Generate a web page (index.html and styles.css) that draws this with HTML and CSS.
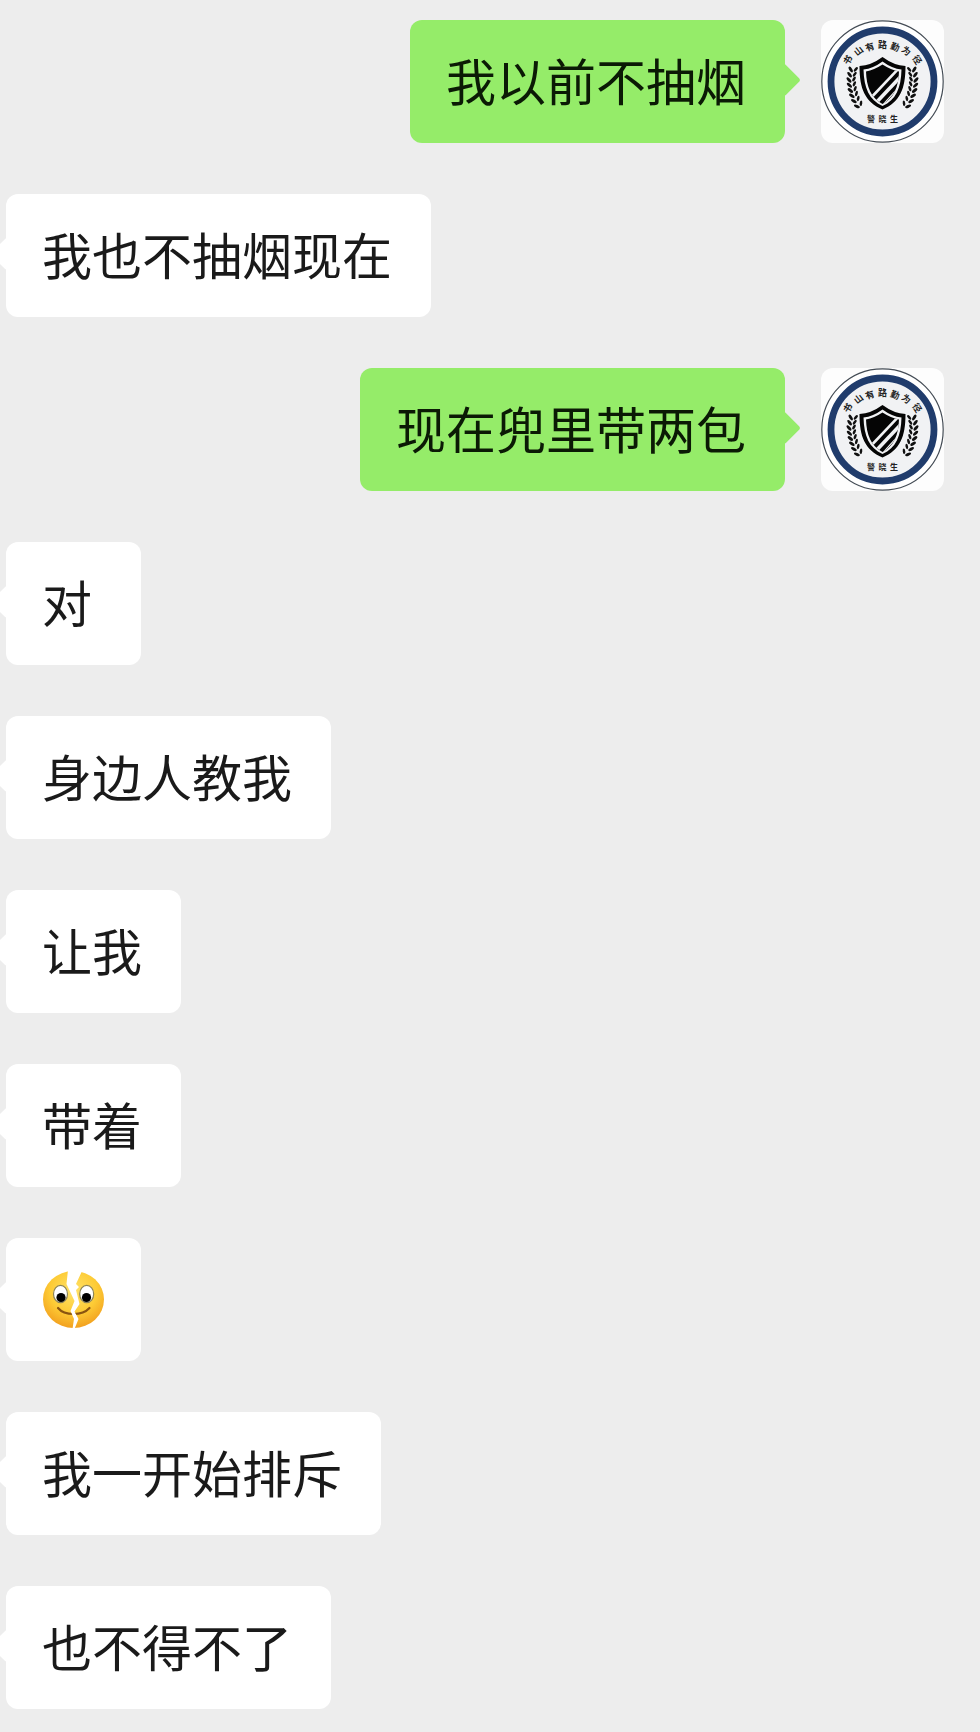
FILE: index.html
```html
<!DOCTYPE html>
<html lang="zh-CN">

<head>
    <meta charset="UTF-8">
    <meta name="viewport" content="width=device-width, initial-scale=1.0">
    <title>聊天</title>
    <link rel="stylesheet" href="styles.css">
</head>

<body>
    <!-- shared avatar badge -->
    <svg class="sprite" aria-hidden="true">
        <defs>
            <clipPath id="shieldInner">
                <path d="M61.5 44.5 Q53 50 45 51.5 C45.5 67 50 78 61.5 84 C73 78 77.5 67 78 51.5 Q70 50 61.5 44.5Z" />
            </clipPath>
            <g id="leaves">
                <ellipse cx="-3" cy="-1" rx="1.5" ry="3.2" transform="rotate(-42 -3 -1)" />
                <ellipse cx="2" cy="-2" rx="1.3" ry="2.8" transform="rotate(32 2 -2)" />
            </g>
            <g id="laurel" fill="#111">
                <use href="#leaves" transform="translate(32.5 51) rotate(10)" />
                <use href="#leaves" transform="translate(31.5 56) rotate(6)" />
                <use href="#leaves" transform="translate(31 61) rotate(0)" />
                <use href="#leaves" transform="translate(31.5 66) rotate(-5)" />
                <use href="#leaves" transform="translate(32.5 71) rotate(-10)" />
                <use href="#leaves" transform="translate(34 76) rotate(-15)" />
                <use href="#leaves" transform="translate(36 81) rotate(-20)" />
                <use href="#leaves" transform="translate(39 86) rotate(-25)" />
            </g>
            <symbol id="badge" viewBox="0 0 123 123">
                <rect width="123" height="123" fill="#fdfdfd" />
                <circle cx="61.5" cy="61.5" r="60.7" fill="#fff" stroke="#444c55" stroke-width="1.2" />
                <circle cx="61.5" cy="61.5" r="51.5" fill="#f1f2f4" stroke="#203c6c" stroke-width="6.8" />
                <g class="badge-text" font-size="9">
                    <text x="61.5" y="24" transform="rotate(-58 61.5 61.5)">书</text>
                    <text x="61.5" y="26" transform="rotate(-38 61.5 61.5)">山</text>
                    <text x="61.5" y="28" transform="rotate(-20 61.5 61.5)">有</text>
                    <text x="61.5" y="28">路</text>
                    <text x="61.5" y="28" transform="rotate(20 61.5 61.5)">勤</text>
                    <text x="61.5" y="26" transform="rotate(38 61.5 61.5)">为</text>
                    <text x="61.5" y="24" transform="rotate(58 61.5 61.5)">径</text>
                </g>
                <g class="badge-text" font-size="8">
                    <text x="50" y="101.5">警</text>
                    <text x="61.5" y="101.5">晓</text>
                    <text x="73" y="101.5">生</text>
                </g>
                <use href="#laurel" />
                <use href="#laurel" transform="translate(123 0) scale(-1 1)" />
                <path d="M61.5 37 Q50 45.5 38.5 46 C38.5 69 44 82 61.5 89.5 C79 82 84.5 69 84.5 46 Q73 45.5 61.5 37Z" fill="#050505" />
                <path d="M61.5 41.5 Q52 48.5 42.5 49.5 C43 68 48 80 61.5 86 C75 80 80 68 80.5 49.5 Q71 48.5 61.5 41.5Z" fill="#f1f2f4" />
                <g clip-path="url(#shieldInner)">
                    <rect x="38" y="40" width="46" height="50" fill="#050505" />
                    <g stroke="#f1f2f4" fill="none">
                        <path d="M46 82 L80 46" stroke-width="2.6" />
                        <path d="M52 86 L84 52" stroke-width="3.6" />
                        <path d="M59 88 L86 58" stroke-width="1.2" />
                    </g>
                </g>
            </symbol>
        </defs>
    </svg>

    <main class="chat">
        <div class="message sent">
            <div class="bubble">我以前不抽烟</div>
            <svg class="avatar" role="img" aria-label="头像"><use href="#badge" /></svg>
        </div>
        <div class="message">
            <div class="bubble">我也不抽烟现在</div>
        </div>
        <div class="message sent">
            <div class="bubble">现在兜里带两包</div>
            <svg class="avatar" role="img" aria-label="头像"><use href="#badge" /></svg>
        </div>
        <div class="message">
            <div class="bubble">对</div>
        </div>
        <div class="message">
            <div class="bubble">身边人教我</div>
        </div>
        <div class="message">
            <div class="bubble">让我</div>
        </div>
        <div class="message">
            <div class="bubble">带着</div>
        </div>
        <div class="message">
            <div class="bubble bubble-emoji">
                <svg class="emoji" viewBox="0 0 61 57" role="img" aria-label="裂开">
                    <defs>
                        <radialGradient id="face" cx="0.5" cy="0.35" r="0.65">
                            <stop offset="0" stop-color="#ffe36a" />
                            <stop offset="0.6" stop-color="#fdcb35" />
                            <stop offset="1" stop-color="#f2a01f" />
                        </radialGradient>
                        <clipPath id="halves">
                            <path d="M-1 -1 H25 L23.5 13 L31.5 30 L27.5 40 L31 48 L29.5 58 H-1Z" />
                            <path d="M62 -1 H39.5 L33 13 L36 16 L33 19 L36.5 33 L31.5 40.5 L35.5 48 L31.5 58 H62Z" />
                        </clipPath>
                    </defs>
                    <g clip-path="url(#halves)">
                        <ellipse cx="30.5" cy="28.5" rx="30.5" ry="28.5" fill="url(#face)" />
                        <path d="M15 37 Q20 43 30.5 43 Q41 43 46.5 37" fill="none" stroke="#8a5410" stroke-width="2.2" stroke-linecap="round" />
                    </g>
                    <g fill="#fff" stroke="#8d8456" stroke-width="1.2">
                        <ellipse cx="17.5" cy="23" rx="7" ry="8.7" />
                        <ellipse cx="43.7" cy="23" rx="7" ry="8.7" />
                    </g>
                    <circle cx="18" cy="26.5" r="4.6" fill="#000" />
                    <circle cx="43.5" cy="26.5" r="4.6" fill="#000" />
                </svg>
            </div>
        </div>
        <div class="message">
            <div class="bubble">我一开始排斥</div>
        </div>
        <div class="message">
            <div class="bubble">也不得不了</div>
        </div>
    </main>
</body>

</html>
```

FILE: styles.css
```css
* {
    box-sizing: border-box;
}

body {
    margin: 0;
    background-color: #ededed;
    font-family: "Noto Sans CJK SC", sans-serif;
    color: #1a1a1a;
}

.sprite {
    position: absolute;
    width: 0;
    height: 0;
}

.chat {
    display: flex;
    flex-direction: column;
    gap: 51px;
    padding: 20px 36px 23px 6px;
    overflow: hidden;
}

.message {
    display: flex;
    align-items: flex-start;
}

.sent {
    justify-content: flex-end;
    gap: 36px;
}

.bubble {
    position: relative;
    display: flex;
    align-items: center;
    min-width: 135px;
    min-height: 123px;
    padding: 22px 39px 26px 36px;
    border-radius: 12px;
    background-color: #fff;
    font-size: 50px;
    line-height: 75px;
}

/* bubble tail */
.bubble::before {
    content: "";
    position: absolute;
    top: 48px;
    left: -11px;
    width: 24px;
    height: 24px;
    border-radius: 3px;
    background-color: inherit;
    transform: rotate(45deg);
}

.sent .bubble {
    background-color: #95ec69;
    color: #0b1a05;
}

.sent .bubble::before {
    left: auto;
    right: -11px;
}

.bubble-emoji {
    padding: 24px 37px;
}

.emoji {
    width: 61px;
    height: 57px;
}

.avatar {
    flex: none;
    width: 123px;
    height: 123px;
    border-radius: 12px;
}

.badge-text {
    font-weight: 700;
    fill: #222;
    text-anchor: middle;
}
```
